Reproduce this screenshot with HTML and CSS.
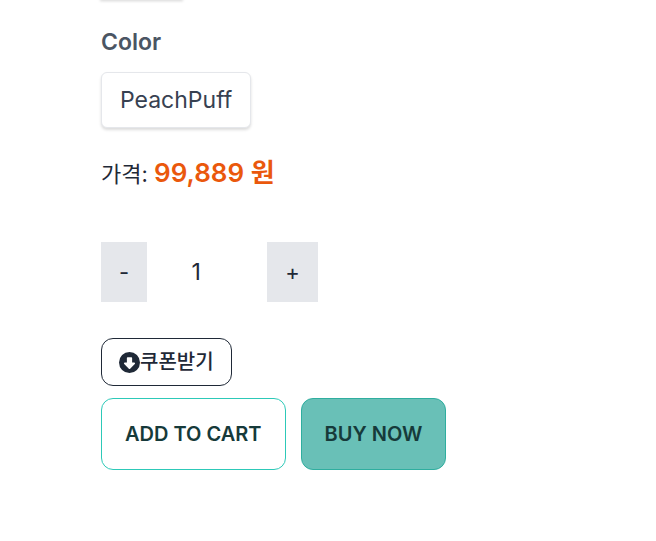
FILE: index.html
```html
<!DOCTYPE html>
<html lang="ko">
<head>
<meta charset="utf-8">
<meta name="viewport" content="width=device-width, initial-scale=1">
<title>Product options</title>
<link rel="stylesheet" href="styles.css">
</head>
<body>
<main class="product">
  <div class="option-stub"></div>
  <h2 class="option-title">Color</h2>
  <button class="option" type="button">PeachPuff</button>
  <p class="price">가격: <strong class="amount">99,889 원</strong></p>
  <div class="quantity">
    <button class="step step-minus" type="button">-</button>
    <input class="count" type="text" inputmode="numeric" value="1" aria-label="Quantity">
    <button class="step step-plus" type="button">+</button>
  </div>
  <button class="coupon" type="button">
    <svg class="coupon-icon" viewBox="0 0 512 512" aria-hidden="true"><path fill="currentColor" fill-rule="evenodd" d="M256 0a256 256 0 1 1 0 512a256 256 0 1 1 0-512zM216 128c-13 0-24 11-24 24v104h-50c-19 0-29 23-15 37l113 113c9 9 23 9 32 0l113-113c14-14 4-37-15-37h-50V152c0-13-11-24-24-24z"/></svg>
    <span>쿠폰받기</span>
  </button>
  <div class="actions">
    <button class="action add" type="button">ADD TO CART</button>
    <button class="action buy" type="button">BUY NOW</button>
  </div>
</main>
</body>
</html>
```
FILE: styles.css
```css
* {
  box-sizing: border-box;
}

body {
  margin: 0;
  background: #fff;
  color: #1f2937;
  font-family: Inter, "Noto Sans CJK KR", sans-serif;
  font-size: 23px;
  line-height: 36px;
}

button,
input {
  margin: 0;
  border: 0;
  color: inherit;
  font: inherit;
}

.product {
  display: flex;
  flex-direction: column;
  align-items: flex-start;
  padding: 0 24px 72px 101px;
}

.option-stub {
  width: 81px;
  height: 0;
  border-radius: 6px;
  box-shadow: 0 0 3px 1px rgba(0, 0, 0, 0.2);
}

.option-title {
  margin: 24px 0 12px;
  color: #4b5563;
  font-size: 23px;
  font-weight: 600;
}

.option {
  padding: 9px 18px;
  border: 1px solid #e5e7eb;
  border-radius: 6px;
  background: #fff;
  box-shadow: 0 2px 3px rgba(0, 0, 0, 0.14);
  color: #374151;
}

.price {
  margin: 27px 0 50px;
  font-size: 22px;
}

.amount {
  color: #ea580c;
  font-size: 26px;
  font-weight: 600;
}

.quantity {
  display: flex;
  height: 60px;
}

.step {
  padding: 0 18px;
  background: #e5e7eb;
  font-size: 22px;
}

.count {
  width: 120px;
  padding: 0 22px 0 0;
  background: #fff;
  text-align: center;
}

.coupon {
  display: flex;
  align-items: center;
  height: 48px;
  margin: 36px 0 12px;
  padding: 0 17px;
  border: 1px solid #1f2937;
  border-radius: 12px;
  background: #fff;
  font-size: 20px;
  font-weight: 500;
}

.coupon-icon {
  width: 21px;
  height: 21px;
}

.actions {
  display: flex;
  flex-wrap: wrap;
  gap: 15px;
}

.action {
  height: 72px;
  padding: 0 23px;
  border: 1px solid #2dc9b8;
  border-radius: 12px;
  background: #fff;
  color: #163a3a;
  font-size: 20px;
  font-weight: 600;
}

.buy {
  border-color: #2fae9f;
  background: #69c0b7;
}
```
